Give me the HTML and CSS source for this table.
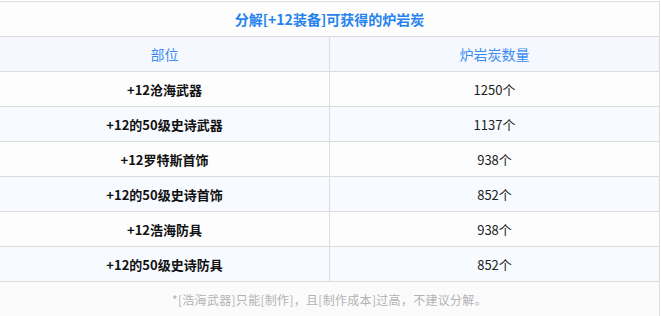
FILE: index.html
```html
<!DOCTYPE html>
<html lang="zh-CN">
<head>
    <meta charset="UTF-8">
    <meta name="viewport" content="width=device-width, initial-scale=1.0">
    <title>分解[+12装备]可获得的炉岩炭</title>
    <link rel="stylesheet" href="styles.css">
</head>
<body>
    <div class="wrap">
        <table class="tbl">
            <tr>
                <th colspan="2" class="title">分解[+12装备]可获得的炉岩炭</th>
            </tr>
            <tr class="head">
                <td>部位</td>
                <td>炉岩炭数量</td>
            </tr>
            <tr>
                <td class="name">+12沧海武器</td>
                <td>1250个</td>
            </tr>
            <tr class="alt">
                <td class="name">+12的50级史诗武器</td>
                <td>1137个</td>
            </tr>
            <tr>
                <td class="name">+12罗特斯首饰</td>
                <td>938个</td>
            </tr>
            <tr class="alt">
                <td class="name">+12的50级史诗首饰</td>
                <td>852个</td>
            </tr>
            <tr>
                <td class="name">+12浩海防具</td>
                <td>938个</td>
            </tr>
            <tr class="alt">
                <td class="name">+12的50级史诗防具</td>
                <td>852个</td>
            </tr>
            <tr>
                <td colspan="2" class="note">*[浩海武器]只能[制作]，且[制作成本]过高，不建议分解。</td>
            </tr>
        </table>
    </div>
</body>
</html>
```

FILE: styles.css
```css
body {
    margin: 0;
    background: #ffffff;
    font-family: "Noto Sans CJK SC", "Noto Sans", sans-serif;
}

.wrap {
    padding-top: 1px;
    margin-left: -1px;
    width: 661px;
}

.tbl {
    width: 100%;
    border-collapse: collapse;
    table-layout: fixed;
}

.tbl th,
.tbl td {
    border: 1px solid #dcdcdc;
    height: 34px;
    padding: 0;
    text-align: center;
    font-size: 13px;
    color: #222;
    background: #fdfdfd;
}

.tbl .title {
    font-size: 14px;
    font-weight: bold;
    color: #2683ee;
}

.tbl .head td {
    background: #f5f9ff;
    font-size: 14px;
    color: #3d8cf2;
}

.tbl .alt td {
    background: #f7faff;
}

.tbl .name {
    font-weight: bold;
    color: #111;
}

.tbl .note {
    background: #fbfbfb;
    font-size: 12px;
    letter-spacing: 0.3px;
    color: #b3b3b3;
}
```
